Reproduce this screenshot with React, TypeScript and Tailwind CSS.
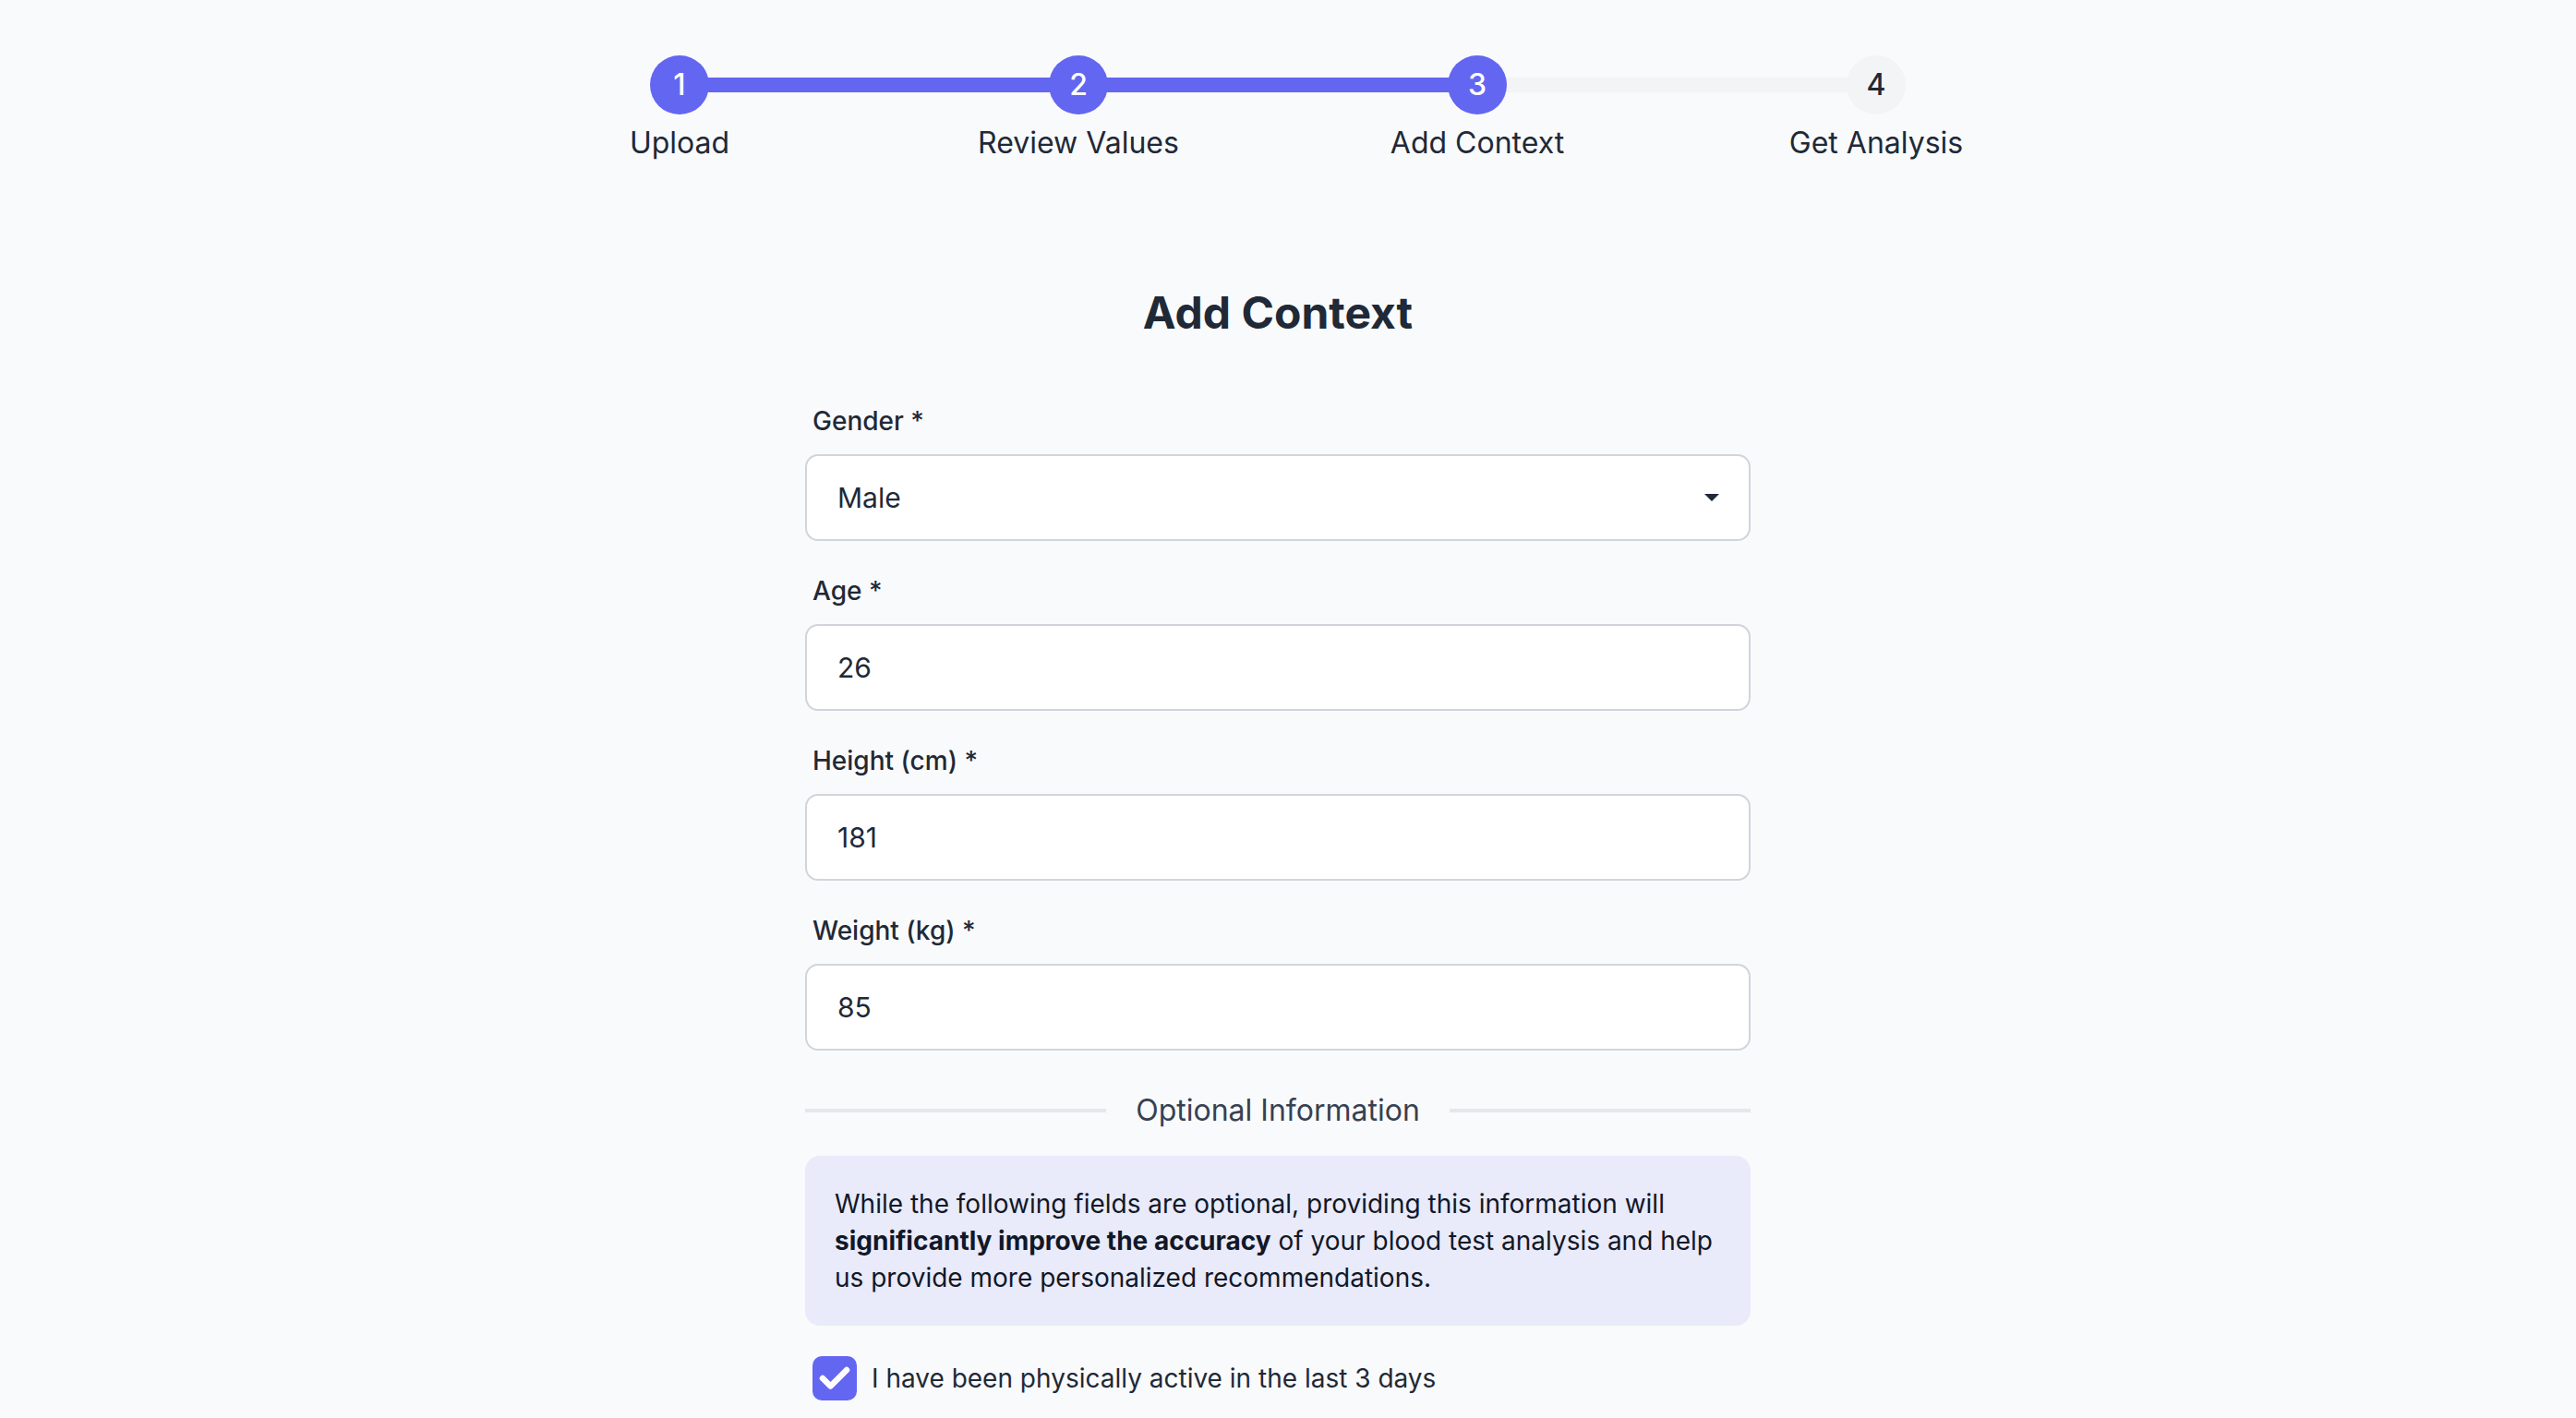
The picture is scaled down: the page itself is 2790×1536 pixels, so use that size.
import { useState } from "react";

const STEPS = [
  { n: 1, label: "Upload" },
  { n: 2, label: "Review Values" },
  { n: 3, label: "Add Context" },
  { n: 4, label: "Get Analysis" },
];

const CURRENT_STEP = 3;

function Stepper() {
  return (
    <div className="relative mx-auto grid w-[1728px] grid-cols-4">
      <div className="absolute left-[216px] right-[216px] top-[24px] h-4 bg-[#f3f4f6]">
        <div className="h-full w-2/3 bg-[#6366f1]" />
      </div>
      {STEPS.map((step) => {
        const reached = step.n <= CURRENT_STEP;
        return (
          <div key={step.n} className="relative flex flex-col items-center">
            <div
              className={`flex h-16 w-16 items-center justify-center rounded-full text-[32px] font-medium ${
                reached ? "bg-[#6366f1] text-white" : "bg-[#f3f4f6] text-[#1f2937]"
              }`}
            >
              {step.n}
            </div>
            <span className="mt-[7px] text-[32px] leading-[48px] text-[#1f2937]">{step.label}</span>
          </div>
        );
      })}
    </div>
  );
}

function Field({ label, children }: { label: string; children: React.ReactNode }) {
  return (
    <div>
      <label className="block pl-2 text-[28px] font-medium leading-[40px] text-[#1f2937]">{label}</label>
      <div className="mt-4 flex h-[94px] items-center rounded-[14px] border-2 border-[#d1d5db] bg-white pl-[33px] pr-8 text-[30px] text-[#1f2937]">
        {children}
      </div>
    </div>
  );
}

export default function App() {
  const [active, setActive] = useState(true);

  return (
    <div className="min-h-screen bg-[#f9fafb] pr-[22px] pt-[60px] font-['Inter',sans-serif] text-[#1f2937]">
      <Stepper />

      <h1 className="mt-[128px] text-center text-[48px] font-bold leading-[64px] text-[#1f2937]">Add Context</h1>

      <div className="mx-auto mt-[65px] w-[1024px] pb-10">
        <div className="flex flex-col gap-[34px]">
          <Field label="Gender *">
            <span className="flex-1">Male</span>
            <svg width="16" height="8" viewBox="0 0 16 8" className="shrink-0">
              <path d="M0 0h16L8 8z" fill="#1f2937" />
            </svg>
          </Field>
          <Field label="Age *">26</Field>
          <Field label="Height (cm) *">181</Field>
          <Field label="Weight (kg) *">85</Field>
        </div>

        <div className="mt-[43px] flex items-center gap-8">
          <div className="h-[4px] flex-1 bg-[#e5e7eb]" />
          <span className="text-[32px] leading-[44px] text-[#374151]">Optional Information</span>
          <div className="h-[4px] flex-1 bg-[#e5e7eb]" />
        </div>

        <div className="mt-[27px] rounded-[16px] bg-[#e9eafa] px-8 py-8 text-[28px] leading-[40px] text-[#111827]">
          While the following fields are optional, providing this information will{" "}
          <strong className="font-bold">significantly improve the accuracy</strong> of your blood test analysis and
          help us provide more personalized recommendations.
        </div>

        <label className="mt-[33px] flex cursor-pointer items-center gap-4 pl-2">
          <button
            type="button"
            onClick={() => setActive(!active)}
            className={`flex h-12 w-12 items-center justify-center rounded-[10px] ${
              active ? "bg-[#6366f1]" : "border-2 border-[#d1d5db] bg-white"
            }`}
          >
            {active && (
              <svg width="48" height="48" viewBox="0 0 48 48">
                <path d="M11 24l8.5 8.5L37 15" fill="none" stroke="white" strokeWidth="6.5" strokeLinecap="round" strokeLinejoin="round" />
              </svg>
            )}
          </button>
          <span className="text-[28px] text-[#1f2937]">I have been physically active in the last 3 days</span>
        </label>
      </div>
    </div>
  );
}
